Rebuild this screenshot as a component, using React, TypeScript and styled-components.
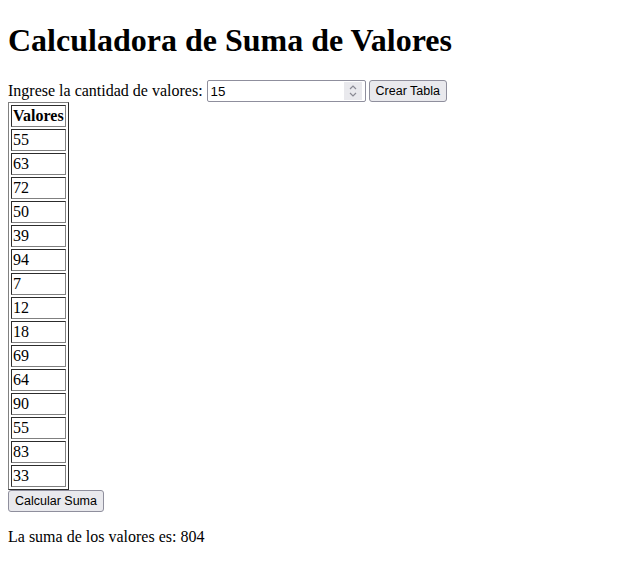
import { useState } from 'react'
import styled, { createGlobalStyle } from 'styled-components'

const GlobalStyle = createGlobalStyle`
  body {
    margin: 0 8px 8px;
    font-family: 'Liberation Serif', 'Times New Roman', serif;
    font-size: 16px;
    color: #000;
    background: #fff;
  }
`

const Title = styled.h1`
  font-size: 32px;
  font-weight: bold;
  margin: 0;
  padding: 21px 0 21px;
  line-height: 38px;
`

const FormRow = styled.div`
  display: flex;
  align-items: center;
  height: 22px;
  line-height: 18px;
`

const Label = styled.label`
  margin-right: 4px;
`

const InputWrap = styled.span`
  position: relative;
  display: inline-flex;
  margin-right: 3px;
`

const NumberInput = styled.input`
  box-sizing: border-box;
  width: 159px;
  height: 22px;
  padding: 1px 3px;
  border: 1px solid #8f8f9d;
  border-radius: 2px;
  font-family: 'Liberation Sans', Arial, sans-serif;
  font-size: 13.33px;
  margin: 0;
  -moz-appearance: textfield;
  &::-webkit-inner-spin-button,
  &::-webkit-outer-spin-button {
    -webkit-appearance: none;
    margin: 0;
  }
`

const Spinner = styled.span`
  position: absolute;
  right: 4px;
  top: 2px;
  width: 18px;
  height: 18px;
  background: #e9e9ed;
  display: flex;
  align-items: center;
  justify-content: center;
  pointer-events: none;
`

const Button = styled.button`
  box-sizing: border-box;
  height: 22px;
  padding: 1px 6px;
  border: 1px solid #8f8f9d;
  border-radius: 3px;
  background: #e9e9ed;
  font-family: 'Liberation Sans', Arial, sans-serif;
  font-size: 12.5px;
  color: #000;
  line-height: 16px;
`

const ValuesTable = styled.table`
  border: 1px outset #808080;
  border-spacing: 2px;
  border-collapse: separate;
`

const HeadCell = styled.th`
  border: 1px inset #808080;
  padding: 1px;
  text-align: left;
  line-height: 18px;
`

const Cell = styled.td`
  border: 1px inset #808080;
  padding: 1px;
  line-height: 18px;
`

const Result = styled.p`
  margin: 16px 0;
`

const initial = [55, 63, 72, 50, 39, 94, 7, 12, 18, 69, 64, 90, 55, 83, 33]

export default function App () {
  const [count, setCount] = useState('15')
  const [values] = useState<number[]>(initial)
  const [sum, setSum] = useState<number | null>(804)

  return (
    <>
      <GlobalStyle />
      <Title>Calculadora de Suma de Valores</Title>
      <FormRow>
        <Label htmlFor='cantidad'>Ingrese la cantidad de valores:</Label>
        <InputWrap>
          <NumberInput
            id='cantidad'
            type='number'
            value={count}
            onChange={e => setCount(e.target.value)}
          />
          <Spinner>
            <svg width='10' height='14' viewBox='0 0 10 14' fill='none' stroke='#8a8a94' strokeWidth='1.2'>
              <path d='M2 5 L5 2 L8 5' />
              <path d='M2 9 L5 12 L8 9' />
            </svg>
          </Spinner>
        </InputWrap>
        <Button>Crear Tabla</Button>
      </FormRow>
      <ValuesTable>
        <thead>
          <tr>
            <HeadCell>Valores</HeadCell>
          </tr>
        </thead>
        <tbody>
          {values.map((v, i) => (
            <tr key={i}>
              <Cell>{v}</Cell>
            </tr>
          ))}
        </tbody>
      </ValuesTable>
      <Button onClick={() => setSum(values.reduce((a, b) => a + b, 0))}>
        Calcular Suma
      </Button>
      {sum !== null && <Result>La suma de los valores es: {sum}</Result>}
    </>
  )
}
